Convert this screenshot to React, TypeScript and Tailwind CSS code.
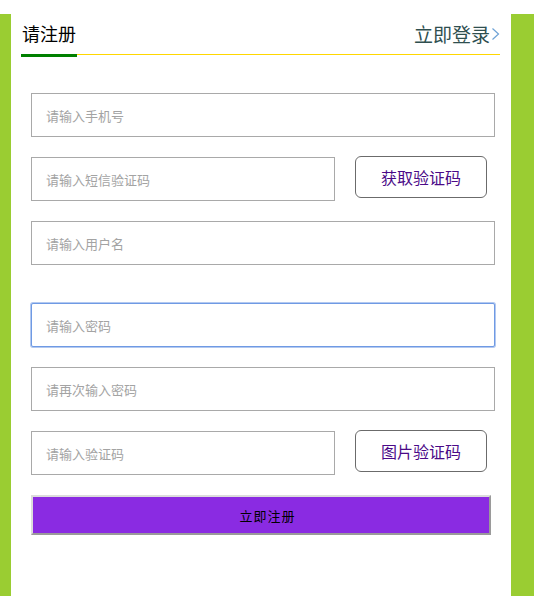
import React from "react";

const font = { fontFamily: '"Noto Sans CJK SC", "Noto Sans", sans-serif' };

function Field({ placeholder, className = "", focused = false }: { placeholder: string; className?: string; focused?: boolean }) {
  return (
    <input
      placeholder={placeholder}
      className={
        "h-[44px] bg-white pl-[14px] text-[13px] text-black outline-none placeholder:text-[#a3a3a3] " +
        (focused
          ? "border border-[#6f9ae4] rounded-[2px] shadow-[0_0_0_1px_#b3c9f0] "
          : "border border-[#a9a9a9] ") +
        className
      }
      style={font}
    />
  );
}

function CodeButton({ label }: { label: string }) {
  return (
    <button
      className="ml-[20px] -mt-[1px] w-[132px] h-[42px] rounded-[6px] border border-[#6b6b6b] bg-white text-[16px] leading-none text-[#4b0a88]"
      style={font}
    >
      {label}
    </button>
  );
}

export default function App() {
  return (
    <div className="w-[534px] h-[596px] bg-white pt-[14px] flex overflow-hidden" style={font}>
      <div className="w-[11px] bg-[#9acd32]" />
      <div className="w-[500px] pl-[10px] pr-[11px]">
        <div className="pt-[10px] flex items-end justify-between border-b border-[#ffd700]">
          <div className="px-[1px] pb-[12px] -mb-[3px] border-b-[3px] border-[#008000] text-[18px] leading-none text-black">
            请注册
          </div>
          <div className="pb-[11px] flex items-center text-[19px] leading-none text-[#2f4f4f]">
            <span>立即登录</span>
            <svg width="9" height="14" viewBox="0 0 9 14" className="ml-[1px]">
              <path d="M1.5 1.5 L7.5 7 L1.5 12.5" fill="none" stroke="#6fa3d6" strokeWidth="1.2" />
            </svg>
          </div>
        </div>
        <div className="mt-[38px] pl-[10px] flex flex-col">
          <Field placeholder="请输入手机号" className="w-[464px]" />
          <div className="mt-[20px] flex items-start">
            <Field placeholder="请输入短信验证码" className="w-[304px]" />
            <CodeButton label="获取验证码" />
          </div>
          <Field placeholder="请输入用户名" className="mt-[20px] w-[464px]" />
          <Field placeholder="请输入密码" className="mt-[38px] w-[464px]" focused />
          <Field placeholder="请再次输入密码" className="mt-[20px] w-[464px]" />
          <div className="mt-[20px] flex items-start">
            <Field placeholder="请输入验证码" className="w-[304px]" />
            <CodeButton label="图片验证码" />
          </div>
          <button
            className="mt-[20px] w-[460px] h-[40px] bg-[#8a2be2] border-2 border-t-[#dcdcdc] border-l-[#dcdcdc] border-b-[#9a9a9a] border-r-[#9a9a9a] pl-[13px] text-[13px] leading-none tracking-[1px] text-black"
            style={font}
          >
            立即注册
          </button>
        </div>
      </div>
      <div className="flex-1 bg-[#9acd32]" />
    </div>
  );
}
